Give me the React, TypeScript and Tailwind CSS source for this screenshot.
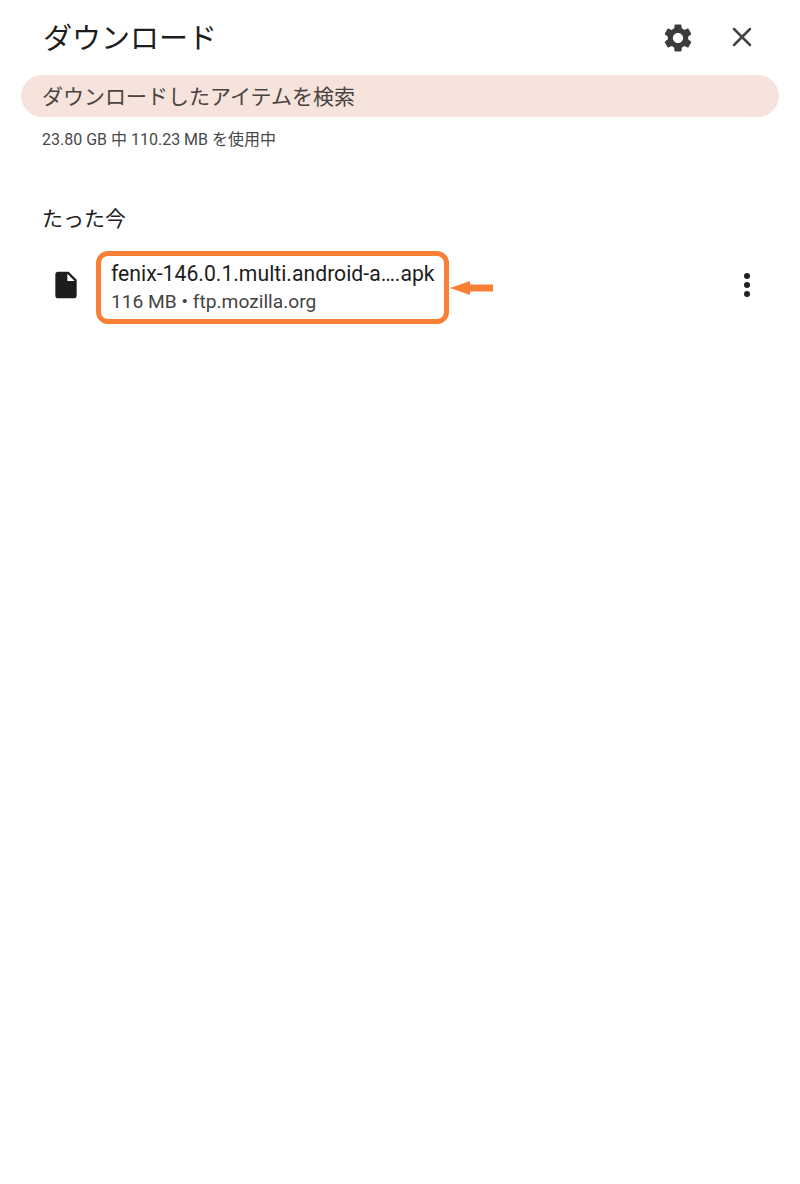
import { X } from "lucide-react";

const jp = "font-['Roboto','Noto_Sans_CJK_JP',sans-serif]";

function GearIcon() {
  return (
    <svg viewBox="0 0 24 24" className="h-[34px] w-[34px] fill-[#3c3c3c]">
      <path d="M19.14 12.94c.04-.3.06-.61.06-.94 0-.32-.02-.64-.07-.94l2.03-1.58c.18-.14.23-.41.12-.61l-1.92-3.32c-.12-.22-.37-.29-.59-.22l-2.39.96c-.5-.38-1.03-.7-1.62-.94l-.36-2.54c-.04-.24-.24-.41-.48-.41h-3.84c-.24 0-.43.17-.47.41l-.36 2.54c-.59.24-1.13.57-1.62.94l-2.39-.96c-.22-.08-.47 0-.59.22L2.74 8.87c-.12.21-.08.47.12.61l2.03 1.58c-.05.3-.09.63-.09.94s.02.64.07.94l-2.03 1.58c-.18.14-.23.41-.12.61l1.92 3.32c.12.22.37.29.59.22l2.39-.96c.5.38 1.03.7 1.62.94l.36 2.54c.05.24.24.41.48.41h3.84c.24 0 .44-.17.47-.41l.36-2.54c.59-.24 1.13-.56 1.62-.94l2.39.96c.22.08.47 0 .59-.22l1.92-3.32c.12-.22.07-.47-.12-.61l-2.01-1.58zM12 15.6c-1.98 0-3.6-1.62-3.6-3.6s1.62-3.6 3.6-3.6 3.6 1.62 3.6 3.6-1.62 3.6-3.6 3.6z" />
    </svg>
  );
}

function FileIcon() {
  return (
    <svg viewBox="0 0 24 24" className="mb-[6px] h-[32px] w-[32px] shrink-0 fill-[#1d1d1d]">
      <path d="M14 2H6c-1.1 0-2 .9-2 2v16c0 1.1.9 2 2 2h12c1.1 0 2-.9 2-2V8l-6-6zm-1 7V3.5L18.5 9H13z" />
    </svg>
  );
}

function ArrowIcon() {
  return (
    <svg viewBox="0 0 43 14" className="h-[14px] w-[43px] fill-[#f97f36]">
      <path d="M0 7 20 0v3.5h23v7H20V14z" />
    </svg>
  );
}

export default function App() {
  return (
    <div className={`min-h-[1184px] w-[800px] bg-white ${jp}`}>
      {/* ヘッダー */}
      <header className="flex h-[75px] items-center justify-between pl-[43px] pr-[42px]">
        <h1 className="mt-[4px] text-[29px] leading-none font-normal text-[#1d1d1d]">ダウンロード</h1>
        <div className="flex items-center gap-[31px]">
          <GearIcon />
          <X className="mb-[2px] h-[32px] w-[32px] text-[#444444]" strokeWidth={1.9} />
        </div>
      </header>

      {/* 検索 */}
      <div className="mx-[21px] flex h-[42px] items-center rounded-full bg-[#f5e3dc] pl-[21px] pt-[3px] text-[21px] text-[#4a4440]">
        ダウンロードしたアイテムを検索
      </div>
      <p className="mt-[12px] pl-[42px] text-[16px] leading-[22px] text-[#484848]">
        23.80 GB 中 110.23 MB を使用中
      </p>

      <h2 className="mt-[53px] pl-[42px] text-[21px] leading-[30px] text-[#1d1d1d]">たった今</h2>

      {/* ダウンロード行 */}
      <div className="mt-[17px] flex items-center pl-[50px] pr-[48px]">
        <FileIcon />
        <div className="ml-[14px] flex h-[73px] w-[353px] flex-col justify-center rounded-[12px] border-[5px] border-[#f97f36] pl-[10px]">
          <p className="mb-[2px] whitespace-nowrap text-[21.2px] leading-[27px] text-[#1d1d1d]">fenix-146.0.1.multi.android-a….apk</p>
          <p className="whitespace-nowrap text-[19.2px] leading-[26px] text-[#444444]">116 MB • ftp.mozilla.org</p>
        </div>
        <div className="ml-[1px] flex">
          <ArrowIcon />
        </div>
        <svg viewBox="0 0 10 26" className="mb-[6px] ml-auto h-[26px] w-[10px] fill-[#222222]">
          <circle cx="5" cy="4" r="3" />
          <circle cx="5" cy="13" r="3" />
          <circle cx="5" cy="22" r="3" />
        </svg>
      </div>
    </div>
  );
}
